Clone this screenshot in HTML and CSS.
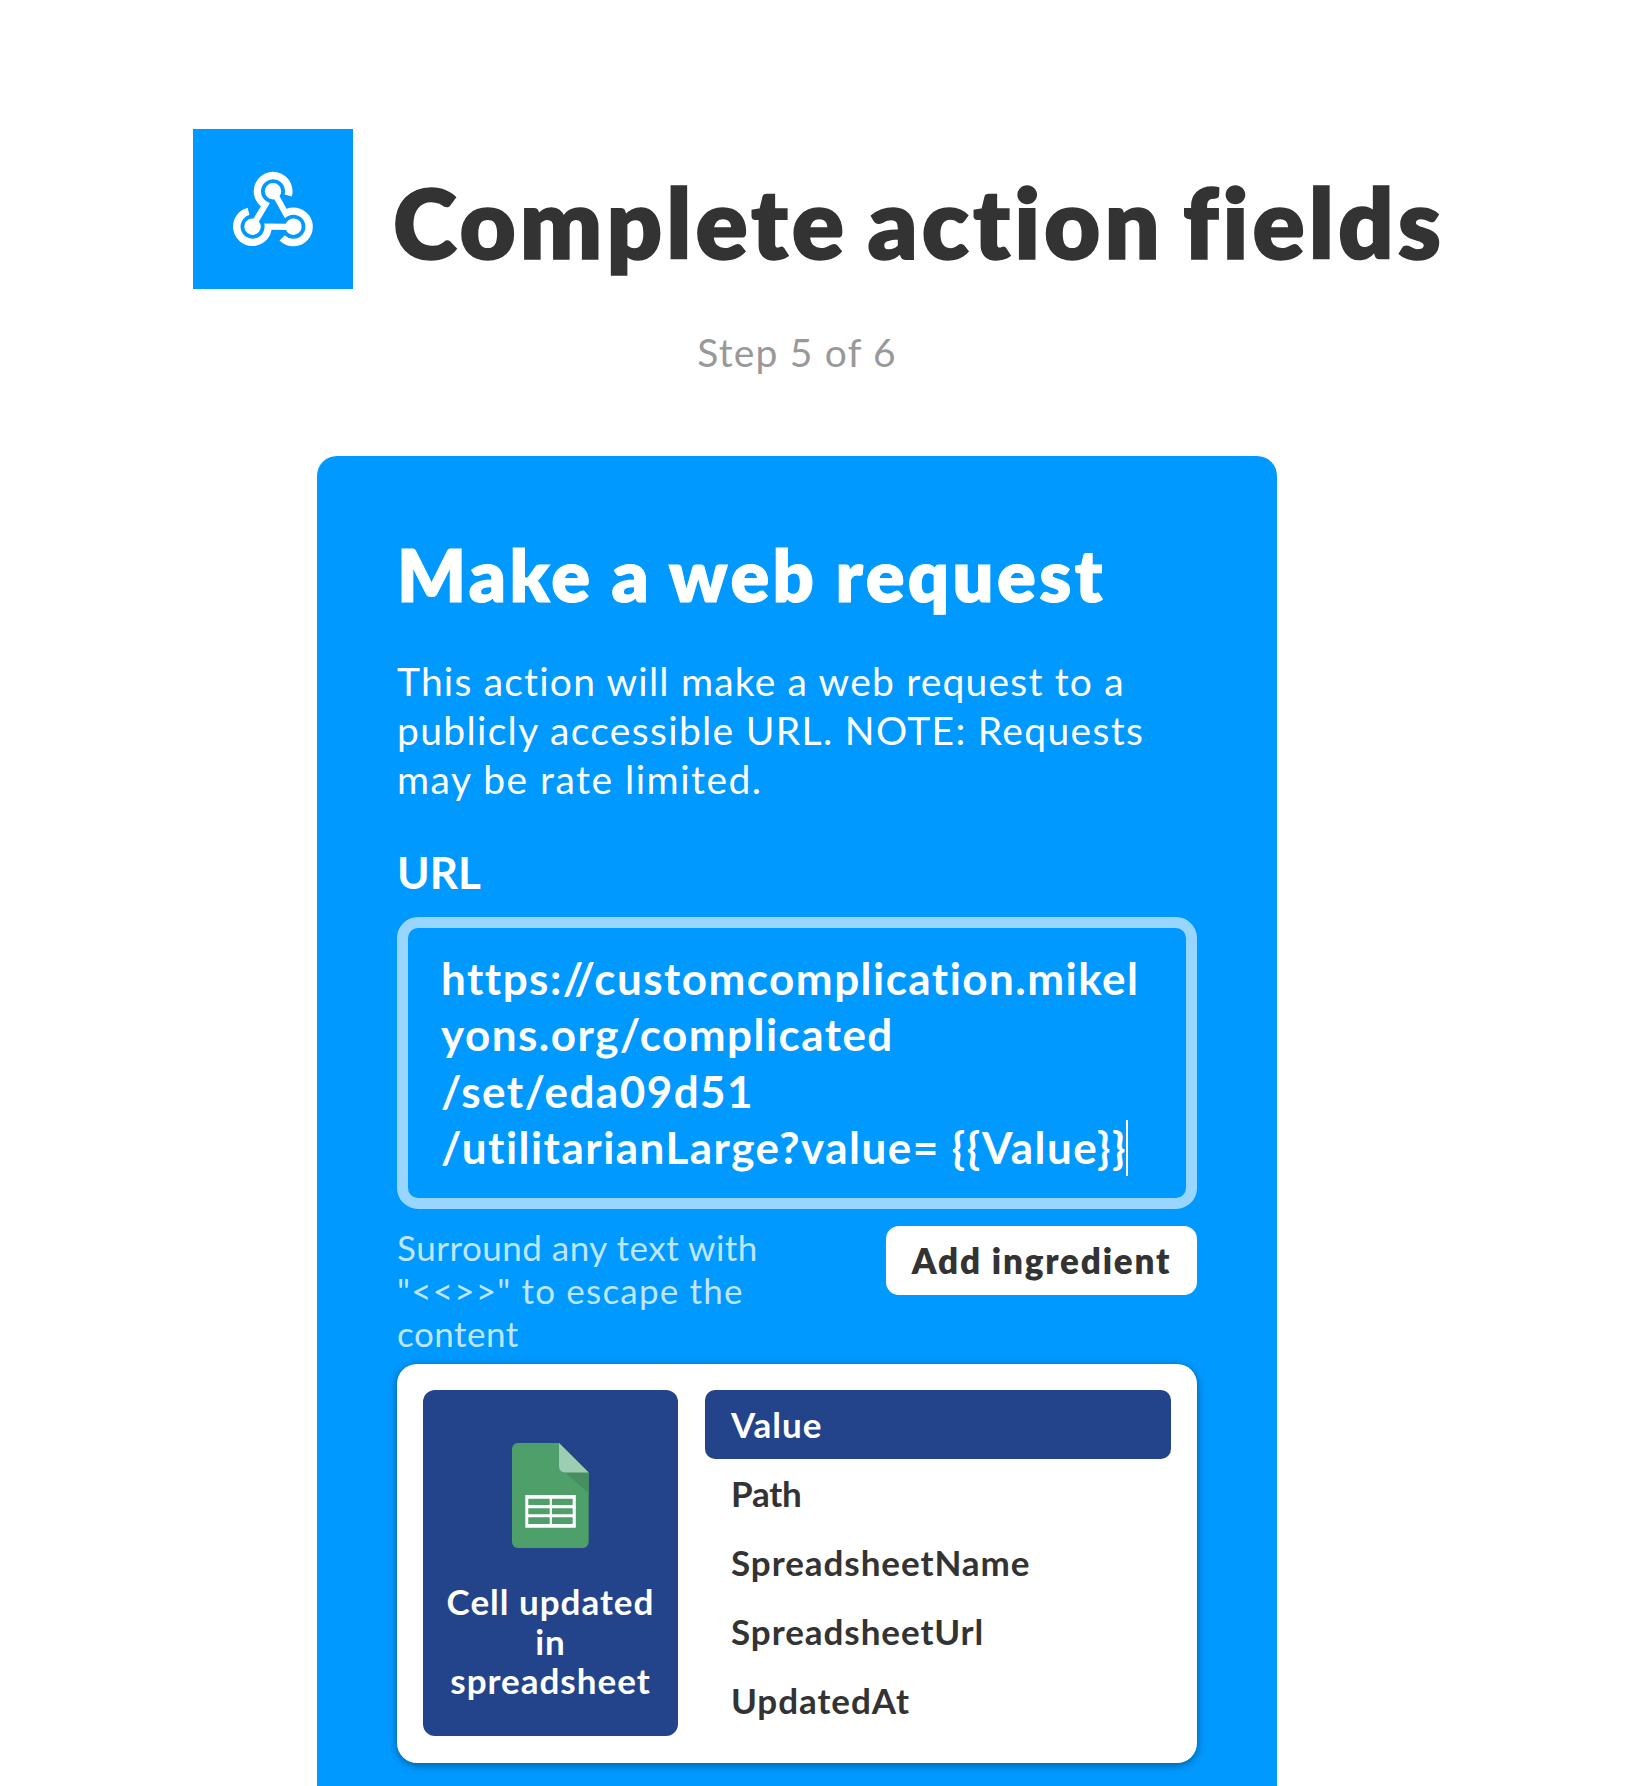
FILE: index.html
```html
<!DOCTYPE html>
<html lang="en">
<head>
<meta charset="utf-8">
<title>Complete action fields</title>
<link rel="stylesheet" href="styles.css">
</head>
<body>
<main class="page">
  <header class="header">
    <svg class="service-icon" viewBox="0 0 160 160" fill="#fff">
      <defs>
        <g id="arm">
          <circle cx="80" cy="62.3" r="8.2"/>
          <path d="M98.8 67.500A19.400 19.400 0 1 0 67.900 77.300L59.600 91L65 94L76.900 73.900A12 12 0 1 1 91.600 65.400Z"/>
        </g>
      </defs>
      <use href="#arm"/>
      <use href="#arm" transform="rotate(120 80 85.9)"/>
      <use href="#arm" transform="rotate(240 80 85.9)"/>
    </svg>
    <h1 class="title">Complete action fields</h1>
  </header>
  <p class="step">Step 5 of 6</p>

  <section class="card">
    <h2 class="card-title">Make a web request</h2>
    <p class="description">
      <span class="line">This action will make a web request to a</span>
      <span class="line">publicly accessible URL. NOTE: Requests</span>
      <span class="line">may be rate limited.</span>
    </p>
    <div class="label">URL</div>
    <div class="url-field">
      <span class="line">https://customcomplication.mikel</span>
      <span class="line">yons.org/complicated</span>
      <span class="line">/set/eda09d51</span>
      <span class="line">/utilitarianLarge?value= {{Value}}<i class="caret"></i></span>
    </div>
    <div class="field-footer">
      <p class="hint">
        <span class="line">Surround any text with</span>
        <span class="line">"&lt;&lt;&gt;&gt;" to escape the</span>
        <span class="line">content</span>
      </p>
      <button class="add-button">Add ingredient</button>
    </div>
    <div class="panel">
      <div class="trigger">
        <svg class="sheet-icon" viewBox="0 0 77 105">
          <path fill="#4e9f69" d="M6 0H47L76.7 29.5V99a6 6 0 0 1-6 6H6a6 6 0 0 1-6-6V6a6 6 0 0 1 6-6Z"/>
          <path fill="#468f5f" d="M51.500 28L76.700 50V29.500Z"/>
          <path fill="#9dcdb3" d="M47 0L76.700 29.500H53a6 6 0 0 1-6-6Z"/>
          <path fill="#fff" fill-rule="evenodd" d="M13.300 52H63.800V84.700H13.300ZM16.300 55.700V62H37.700V55.700ZM40 55.700V62H60.700V55.700ZM16.300 65.200V71.300H37.700V65.200ZM40 65.200V71.300H60.700V65.200ZM16.300 74.300V81H37.700V74.300ZM40 74.300V81H60.700V74.300Z"/>
        </svg>
        <div class="trigger-name">
          <span class="line">Cell updated</span>
          <span class="line">in</span>
          <span class="line">spreadsheet</span>
        </div>
      </div>
      <ul class="ingredients">
        <li class="ingredient selected">Value</li>
        <li class="ingredient short">Path</li>
        <li class="ingredient">SpreadsheetName</li>
        <li class="ingredient">SpreadsheetUrl</li>
        <li class="ingredient">UpdatedAt</li>
      </ul>
    </div>
  </section>
</main>
</body>
</html>
```
FILE: styles.css
```css
* {
  box-sizing: border-box;
  margin: 0;
  padding: 0;
}

body {
  background: #fff;
  color: #333;
  font-family: Lato, "Open Sans", sans-serif;
  font-variant-ligatures: none;
}

.page {
  width: 1594px;
  height: 1786px;
  padding-top: 129px;
  display: flex;
  flex-direction: column;
  align-items: center;
}

.line {
  display: block;
  white-space: nowrap;
}

.header {
  display: flex;
  gap: 40px;
  flex: none;
  align-self: flex-start;
  margin-left: 193px;
}

.service-icon {
  width: 160px;
  height: 160px;
  flex: none;
  background: #0099ff;
}

.title {
  padding-top: 36px;
  font-size: 97px;
  font-weight: 800;
  line-height: 114px;
  letter-spacing: 4px;
  word-spacing: -7px;
  height: 160px;
  white-space: nowrap;
  -webkit-text-stroke: 1.5px currentColor;
}

.step {
  margin-top: 39px;
  font-size: 39px;
  line-height: 48px;
  letter-spacing: 1.2px;
  color: #999;
}

.card {
  flex: 1;
  width: 960px;
  min-height: 0;
  margin-top: 80px;
  padding: 75px 80px 0;
  border-radius: 20px 20px 0 0;
  background: #0099ff;
  color: #fff;
}

.card-title {
  font-size: 72px;
  font-weight: 800;
  line-height: 86px;
  letter-spacing: 3.4px;
  word-spacing: -2px;
  white-space: nowrap;
  -webkit-text-stroke: 1px currentColor;
}

.description {
  margin-top: 40px;
  font-size: 39px;
  line-height: 49px;
  letter-spacing: 1.2px;
}

.description .line:nth-child(2) {
  letter-spacing: 1.33px;
}

.description .line:nth-child(3) {
  letter-spacing: 1.5px;
}

.label {
  margin-top: 41px;
  font-size: 44px;
  font-weight: 700;
  line-height: 54px;
}

.url-field {
  height: 292px;
  margin-top: 18px;
  padding: 22px 33px;
  border: 11px solid #99d6ff;
  border-radius: 21px;
  font-size: 44px;
  font-weight: 700;
  line-height: 56.33px;
  letter-spacing: 1.47px;
}

.caret {
  display: inline-block;
  width: 2px;
  height: 56px;
  margin: 0 -2px 0 -1px;
  vertical-align: -12px;
  background: #fff;
}

.field-footer {
  display: flex;
  justify-content: space-between;
  align-items: flex-start;
  margin-top: 17px;
}

.hint {
  font-size: 35px;
  line-height: 43px;
  letter-spacing: 0.5px;
  color: #bfe5ff;
}

.hint .line:nth-child(2) {
  letter-spacing: 1.2px;
}

.add-button {
  width: 311px;
  height: 69px;
  padding-bottom: 1px;
  border: 0;
  border-radius: 13px;
  background: #fff;
  color: #333;
  font-family: inherit;
  font-size: 35px;
  font-weight: 800;
  line-height: 68px;
  letter-spacing: 1.8px;
  white-space: nowrap;
}

.panel {
  display: flex;
  gap: 27px;
  height: 399px;
  margin-top: 9px;
  padding: 26px;
  border-radius: 20px;
  background: #fff;
  box-shadow: 0 2px 8px rgba(0, 0, 0, 0.4);
}

.trigger {
  display: flex;
  flex-direction: column;
  align-items: center;
  width: 255px;
  height: 346px;
  padding-top: 53px;
  border-radius: 12px;
  background: #23448a;
}

.sheet-icon {
  width: 77px;
  height: 105px;
  flex: none;
}

.trigger-name {
  margin-top: 34px;
  font-size: 35px;
  font-weight: 700;
  line-height: 39.6px;
  letter-spacing: 1px;
  text-align: center;
}

.ingredients {
  flex: 1;
  list-style: none;
}

.ingredient {
  height: 69px;
  padding-left: 26px;
  border-radius: 10px;
  color: #333;
  font-size: 35px;
  font-weight: 700;
  line-height: 69px;
  letter-spacing: 0.95px;
}

.ingredient.short {
  letter-spacing: -0.2px;
}

.ingredient.selected {
  background: #23448a;
  color: #fff;
  line-height: 68px;
}
```
